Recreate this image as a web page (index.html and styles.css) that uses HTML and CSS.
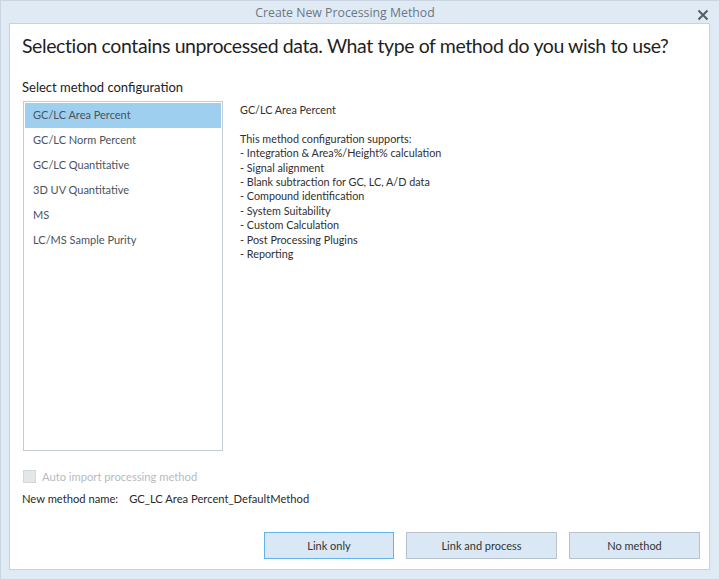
FILE: index.html
```html
<!DOCTYPE html>
<html>
<head>
<meta charset="utf-8">
<link rel="stylesheet" href="styles.css">
</head>
<body>
<div class="window">
  <div class="titlebar">
    <span class="title">Create New Processing Method</span>
    <span class="close"><svg width="12" height="12" viewBox="0 0 12 12"><path d="M1.5 1.5 L10.5 10.5 M10.5 1.5 L1.5 10.5" stroke="#555b62" stroke-width="2" fill="none"/></svg></span>
  </div>
  <div class="panel">
    <h1 class="heading">Selection contains unprocessed data. What type of method do you wish to use?</h1>
    <div class="section-label">Select method configuration</div>
    <div class="main">
      <ul class="list">
        <li class="item selected">GC/LC Area Percent</li>
        <li class="item">GC/LC Norm Percent</li>
        <li class="item">GC/LC Quantitative</li>
        <li class="item">3D UV Quantitative</li>
        <li class="item">MS</li>
        <li class="item">LC/MS Sample Purity</li>
      </ul>
      <div class="desc">
        <div>GC/LC Area Percent</div>
        <div>&nbsp;</div>
        <div>This method configuration supports:</div>
        <div>- Integration &amp; Area%/Height% calculation</div>
        <div>- Signal alignment</div>
        <div>- Blank subtraction for GC, LC, A/D data</div>
        <div>- Compound identification</div>
        <div>- System Suitability</div>
        <div>- Custom Calculation</div>
        <div>- Post Processing Plugins</div>
        <div>- Reporting</div>
      </div>
    </div>
    <div class="check-row">
      <span class="checkbox"></span>
      <span class="check-label">Auto import processing method</span>
    </div>
    <div class="name-row">
      <span class="name-label">New method name:</span>
      <span class="name-value">GC_LC Area Percent_DefaultMethod</span>
    </div>
    <div class="buttons">
      <button class="btn btn-link focused">Link only</button>
      <button class="btn btn-process">Link and process</button>
      <button class="btn btn-none">No method</button>
    </div>
  </div>
</div>
</body>
</html>
```

FILE: styles.css
```css
* { box-sizing: border-box; }
html, body { margin: 0; padding: 0; }
body {
  width: 720px;
  height: 580px;
  overflow: hidden;
  background: #dfeaf4;
  font-family: "Lato", "Open Sans", sans-serif;
}
.window {
  width: 720px;
  height: 580px;
  background: #dfeaf4;
  border: 1px solid #c9d5e0;
  display: flex;
  flex-direction: column;
}
.titlebar {
  height: 22px;
  position: relative;
  display: flex;
  align-items: center;
  justify-content: center;
  padding-right: 30px;
}
.title {
  font-family: "Open Sans", sans-serif;
  font-size: 12.3px;
  color: #6b7785;
  margin-top: 1px;
}
.close {
  position: absolute;
  right: 10px;
  top: 8px;
  width: 12px;
  height: 12px;
  display: flex;
}
.panel {
  margin: 0 9px 9px 8px;
  flex: 1;
  background: #ffffff;
  border: 1px solid #c8d3dd;
  display: flex;
  flex-direction: column;
  padding: 9px 9px 10px 12px;
}
.heading {
  margin: 0;
  font-weight: 400;
  font-size: 19.5px;
  letter-spacing: -0.4px;
  line-height: 26px;
  color: #1f1f1f;
  white-space: nowrap;
}
.section-label {
  margin-top: 19px;
  font-size: 13px;
  line-height: 18px;
  color: #222;
}
.main {
  margin-top: 5px;
  display: flex;
  gap: 17px;
}
.list {
  list-style: none;
  margin: 0 0 0 1px;
  padding: 1px;
  width: 200px;
  height: 350px;
  border: 1px solid #c3cbd3;
}
.item {
  height: 25px;
  line-height: 24px;
  padding-left: 8px;
  font-size: 11px;
  color: #4a535d;
}
.item.selected {
  background: #9fcfee;
}
.desc {
  padding-top: 2px;
  font-size: 10.8px;
  line-height: 14.4px;
  color: #303030;
}
.check-row {
  margin-top: 17px;
  height: 16px;
  display: flex;
  align-items: center;
  margin-left: 1px;
}
.checkbox {
  width: 13px;
  height: 13px;
  background: #e4e7ea;
  border: 1px solid #d3d7db;
}
.check-label {
  margin-left: 6px;
  font-size: 11.2px;
  color: #b5bbc1;
}
.name-row {
  margin-top: 6px;
  height: 16px;
  display: flex;
  align-items: center;
  font-size: 11.2px;
  color: #2a2a2a;
}
.name-value {
  margin-left: 11px;
}
.buttons {
  margin-top: auto;
  display: flex;
  justify-content: flex-end;
  gap: 12px;
}
.btn {
  height: 27px;
  background: #dae8f5;
  border: 1px solid #b8c2cb;
  font-family: "Lato", "Open Sans", sans-serif;
  font-size: 11px;
  color: #333;
  padding: 0;
}
.btn-link { width: 130px; }
.btn-process { width: 151px; }
.btn-none { width: 131px; }
.btn.focused { border-color: #64b2ea; }
```
